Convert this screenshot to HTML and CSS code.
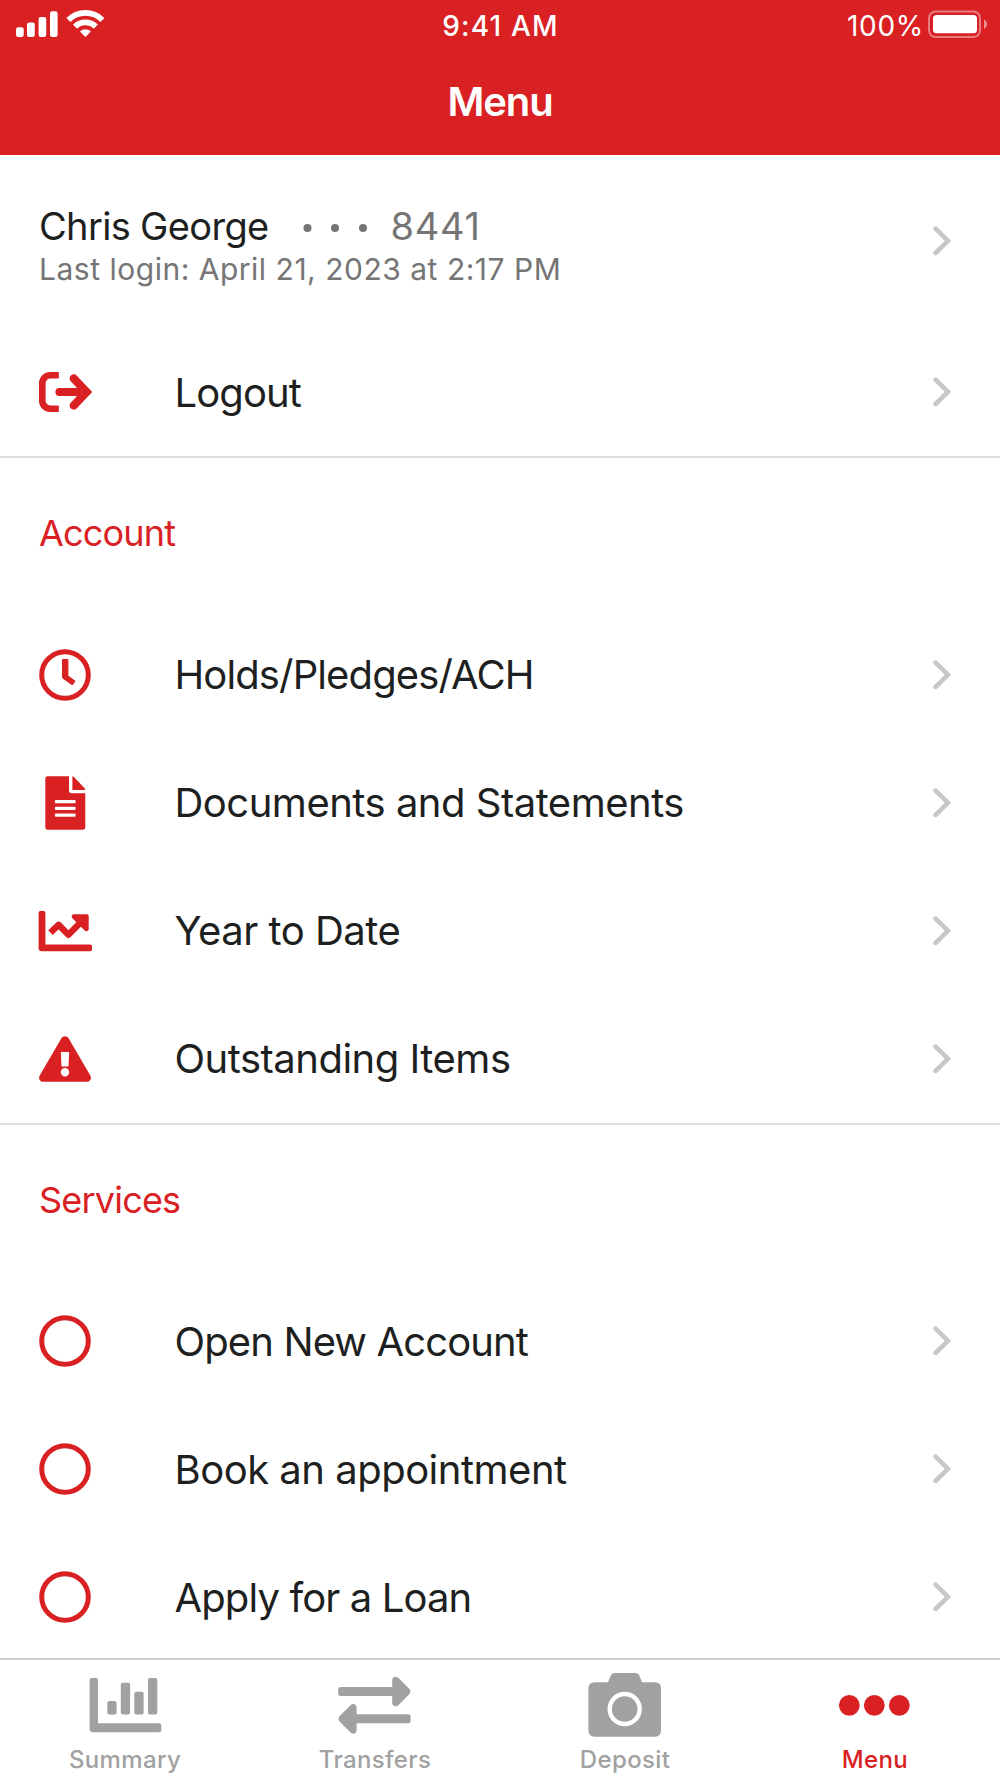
FILE: index.html
```html
<!DOCTYPE html>
<html lang="en">
<head>
<meta charset="utf-8">
<title>Menu</title>
<link rel="stylesheet" href="styles.css">
</head>
<body>
<svg class="defs" width="0" height="0" aria-hidden="true">
  <symbol id="chevron" viewBox="0 0 18 30"><path d="M2.6 2.6 15 14.8 2.6 27" fill="none" stroke="currentColor" stroke-width="4.6" stroke-linecap="round" stroke-linejoin="miter"/></symbol>
  <symbol id="ring" viewBox="0 0 54 54"><circle cx="27" cy="27" r="23.3" fill="none" stroke="currentColor" stroke-width="5"/></symbol>
</svg>
<div class="screen">
  <header class="top">
    <div class="status">
      <svg class="signal" width="92" height="28" viewBox="0 0 92 28" fill="#fff">
        <rect x="0" y="17.3" width="7.7" height="9.7" rx="2.2"/><rect x="11" y="12.5" width="7.8" height="14.5" rx="2.2"/><rect x="22.6" y="7" width="7.6" height="20" rx="2.2"/><rect x="34" y="1.3" width="7.6" height="25.7" rx="2.2"/>
        <g transform="translate(69.4 27)"><path d="M-17-17A24 24 0 0 1 17-17M-10.4-10.4A14.8 14.8 0 0 1 10.4-10.4" fill="none" stroke="#fff" stroke-width="5.8"/><path d="M0 0-5.5-5.5A7.9 7.9 0 0 1 5.5-5.5Z"/></g>
      </svg>
      <span class="time">9:41 AM</span>
      <div class="power">
        <span class="percent">100%</span>
        <svg width="60" height="28" viewBox="0 0 60 28"><rect x="1" y="1.5" width="51" height="25.5" rx="6.5" fill="none" stroke="#fff" stroke-opacity=".42" stroke-width="2"/><rect x="5" y="5" width="44" height="18.3" rx="3.6" fill="#fff"/><path d="M56 9.2q3 2 3 5t-3 5z" fill="#fff" fill-opacity=".5"/></svg>
      </div>
    </div>
    <h1 class="title">Menu</h1>
  </header>

  <main class="content">
    <section class="group first">
      <a class="profile">
        <div class="who">
          <div class="name"><span>Chris George</span>
            <svg width="60" height="10" viewBox="0 0 60 10" fill="currentColor"><circle cx="4.5" cy="5" r="4"/><circle cx="32" cy="5" r="4"/><circle cx="60" cy="5" r="4"/></svg>
            <span class="digits">8441</span></div>
          <div class="login">Last login: April 21, 2023 at 2:17 PM</div>
        </div>
        <svg class="go"><use href="#chevron"/></svg>
      </a>
      <a class="row">
        <svg class="icon" viewBox="0 0 54 54" fill="none" stroke="currentColor"><path d="M20.8 10.3H12.3a8 8 0 0 0-8 8v17.4a8 8 0 0 0 8 8h8.500" stroke-width="6.600"/><path d="M21.500 27H46" stroke-width="8.200" stroke-linecap="round"/><path d="M35.800 13.500 48.400 27 35.800 40.500" stroke-width="8.400" stroke-linecap="round"/></svg>
        <span class="label tight">Logout</span><svg class="go"><use href="#chevron"/></svg>
      </a>
    </section>

    <section class="group">
      <h2 class="heading">Account</h2>
      <a class="row">
        <svg class="icon" viewBox="0 0 54 54"><circle cx="27" cy="27" r="23.3" fill="none" stroke="currentColor" stroke-width="5"/><path d="M24.8 11h4.8q.8 0 .8.8v16l6.6 4.7q.6.5.2 1.1l-2.3 3.1q-.5.7-1.2.2l-8.8-6.2q-.9-.6-.9-1.6V11.8q0-.8.8-.8z" fill="currentColor"/></svg>
        <span class="label tight">Holds/Pledges/ACH</span><svg class="go"><use href="#chevron"/></svg>
      </a>
      <a class="row">
        <svg class="icon" viewBox="0 0 54 54" fill="currentColor"><path d="M9.8.3H31v14.5q0 2.4 2.4 2.4h13.9v33.9q0 2.6-2.6 2.6H9.8q-2.5 0-2.5-2.6V2.8Q7.3.3 9.8.3zM17.8 24q-.9 0-.9.9v1.5q0 .9.9.9h18.9q.9 0 .9-.9v-1.5q0-.9-.9-.9zM17.8 30.7q-.9 0-.9.9v1.5q0 .9.9.9h18.9q.9 0 .9-.9v-1.5q0-.9-.9-.9zM17.8 37.4q-.9 0-.9.9v1.5q0 .9.9.9h18.9q.9 0 .9-.9v-1.5q0-.9-.9-.9z" fill-rule="evenodd"/><path d="M34.4.3q1 .1 1.8.9L46.4 11.9q.9.9.9 2H34.4z"/></svg>
        <span class="label">Documents and Statements</span><svg class="go"><use href="#chevron"/></svg>
      </a>
      <a class="row">
        <svg class="icon" viewBox="0 0 54 54" fill="currentColor"><path d="M2.3 7h3.4q1.7 0 1.7 1.7v31.7h44.9q1.7 0 1.7 1.7v3.4q0 1.7-1.7 1.7H3.9q-3.3 0-3.3-3.3V8.7Q.6 7 2.3 7z"/><path d="M12.5 28.6 20.6 20.9 30.4 30.7 43 18" fill="none" stroke="currentColor" stroke-width="6.5" stroke-linejoin="round"/><path d="M35.9 10.3h13q1.8 0 1.8 1.8v13c0 2.3-2.7 2.8-4 1.5L34.4 14.3c-1.4-1.3-.7-4 1.5-4z"/></svg>
        <span class="label">Year to Date</span><svg class="go"><use href="#chevron"/></svg>
      </a>
      <a class="row">
        <svg class="icon" viewBox="0 0 54 54" fill="currentColor"><path fill-rule="evenodd" d="M23.4 6.2q1.3-2 3.6-2t3.6 2L52.3 43.4c1.7 3-.1 6.3-3.5 6.3H5.2c-3.4 0-5.2-3.3-3.5-6.3zM23.6 20q-.8 0-.8.8l.7 12.9q.1.9.9.9h5.2q.8 0 .9-.9l.7-12.9q0-.8-.8-.8zM27 36a4.2 4.2 0 1 0 0 8.4 4.2 4.2 0 0 0 0-8.4z"/></svg>
        <span class="label">Outstanding Items</span><svg class="go"><use href="#chevron"/></svg>
      </a>
    </section>

    <section class="group">
      <h2 class="heading">Services</h2>
      <a class="row"><svg class="icon"><use href="#ring"/></svg><span class="label tight">Open New Account</span><svg class="go"><use href="#chevron"/></svg></a>
      <a class="row"><svg class="icon"><use href="#ring"/></svg><span class="label">Book an appointment</span><svg class="go"><use href="#chevron"/></svg></a>
      <a class="row"><svg class="icon"><use href="#ring"/></svg><span class="label tight">Apply for a Loan</span><svg class="go"><use href="#chevron"/></svg></a>
    </section>
  </main>

  <nav class="tabs">
    <a class="tab">
      <svg width="74" height="66" viewBox="-0.6 0 74 66" fill="currentColor"><path d="M3 6h4.4q2 0 2 2v43.3h61.3q2 0 2 2v5q0 2-2 2H4.5q-3.5 0-3.5-3.5V8q0-2 2-2z"/><rect x="18.7" y="29" width="9.3" height="13.5" rx="2"/><rect x="32.2" y="10.7" width="9.3" height="31.8" rx="2"/><rect x="45.7" y="19.7" width="9.3" height="22.8" rx="2"/><rect x="59.4" y="6" width="9.3" height="36.5" rx="2"/></svg>
      <span>Summary</span>
    </a>
    <a class="tab">
      <svg width="74" height="66" viewBox="0.8 0 74 66" fill="currentColor"><path id="arrow" d="M3.5 15.1H55V8.5c0-4 3.7-5 6.3-2.4L72 16.8q2.3 2.700 0 5.500L61.300 33c-2.600 2.600-6.300 1.500-6.300-2.400v-6.500H3.500Q1 24.100 1 21.600v-4q0-2.500 2.500-2.500z"/><use href="#arrow" transform="rotate(180 37.2 33.2)"/></svg>
      <span>Transfers</span>
    </a>
    <a class="tab">
      <svg width="74" height="66" viewBox="0 0 74 66"><path d="M7 10.3h13.1l2.3-6q1.4-3.3 5-3.3h19.3q3.7 0 5 3.3l2.3 6h12.7q6.3 0 6.3 6.4v41.6q0 6.4-6.3 6.4H6.7Q.4 64.7.4 58.300V16.700q0-6.400 6.600-6.400z" fill="currentColor"/><circle cx="36.7" cy="37" r="15" fill="none" stroke="#fff" stroke-width="4.4"/></svg>
      <span>Deposit</span>
    </a>
    <a class="tab active">
      <svg width="74" height="66" viewBox="0 0 74 66" fill="currentColor"><circle cx="11.3" cy="33.3" r="10.4"/><circle cx="36.3" cy="33.3" r="10.4"/><circle cx="61.3" cy="33.3" r="10.4"/></svg>
      <span>Menu</span>
    </a>
  </nav>
</div>
</body>
</html>
```
FILE: styles.css
```css
* { box-sizing: border-box; }
body { margin: 0; background: #fff; color: #1e1f20; font-family: Inter, "Liberation Sans", sans-serif; }
.defs { display: block; }
.screen { width: 1000px; height: 1778px; display: flex; flex-direction: column; overflow: hidden; }
svg { display: block; flex: none; }

.top { height: 155px; flex: none; background: #d92123; color: #fff; }
.status { height: 52px; padding: 10px 12px 0 16px; display: grid; grid-template-columns: 1fr auto 1fr; align-items: start; }
.time { margin-right: 3px; font-size: 28px; line-height: 32px; font-weight: 500; letter-spacing: 1.2px; }
.power { display: flex; justify-content: flex-end; gap: 4px; }
.percent { font-size: 28px; line-height: 32px; letter-spacing: .7px; }
.title { margin: 25px 0 0; text-align: center; font-size: 40px; line-height: 50px; font-weight: 600; letter-spacing: -1.1px; }

.content { flex: 1; min-height: 0; overflow: hidden; }
.group { border-bottom: 2px solid #dedede; height: 666.6px; }
.group.first { height: 303px; padding-top: 45px; }
.profile, .row { display: flex; align-items: center; padding: 0 49.5px 0 38px; }
.profile { height: 128px; padding-bottom: 46px; padding-left: 39px; }
.who { flex: 1; margin-top: 10px; }
.name { display: flex; align-items: center; font-size: 38px; line-height: 46px; letter-spacing: -.66px; }
.name svg { margin: 3px 28px 0 34px; color: #757575; overflow: visible; }
.digits { color: #757575; letter-spacing: .7px; }
.login { font-size: 30px; line-height: 40px; color: #757575; letter-spacing: .51px; }
.heading { margin: 0; padding: 48px 39px 0; height: 152.7px; font-size: 36px; line-height: 54px; font-weight: 400; color: #d92123; letter-spacing: -.8px; }
.row { height: 128px; }
.icon { width: 54px; height: 54px; color: #d92123; }
.label { flex: 1; margin-left: 82.5px; padding-top: 1.2px; font-size: 40px; line-height: 50px; letter-spacing: -.5px; white-space: nowrap; }
.label.tight { letter-spacing: -.88px; }
.go { width: 18px; height: 30px; color: #c7c7c9; }

.tabs { height: 120px; flex: none; border-top: 2px solid #cfcfcf; display: grid; grid-template-columns: repeat(4, 1fr); background: #fff; }
.tab { display: flex; flex-direction: column; align-items: center; padding-top: 12px; color: #a1a1a1; font-size: 24px; line-height: 30px; font-weight: 500; letter-spacing: .35px; }
.tab span { margin-top: 7px; }
.tab.active { color: #d92123; }
```
